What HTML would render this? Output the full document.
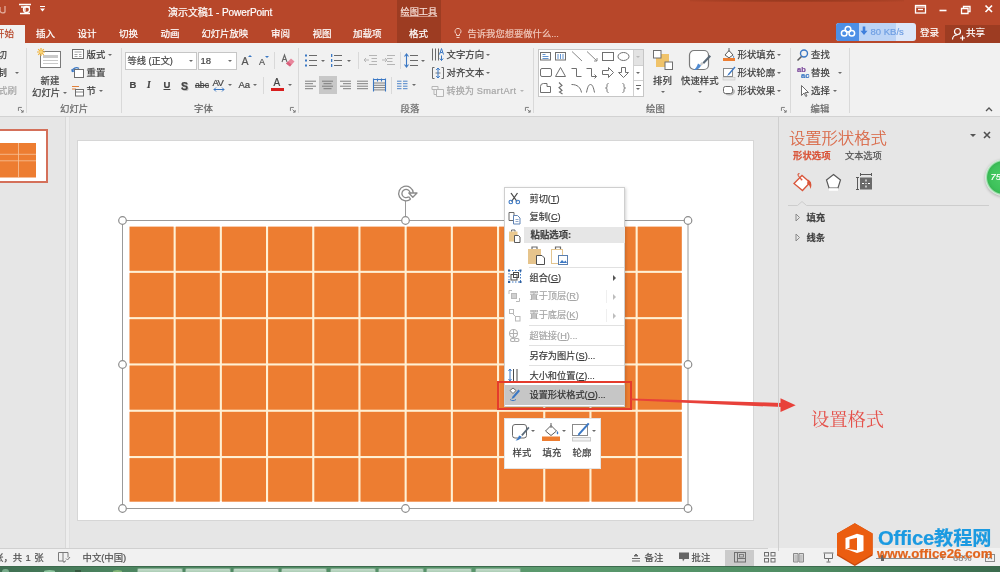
<!DOCTYPE html>
<html lang="zh-CN">
<head>
<meta charset="utf-8">
<title>演示文稿1 - PowerPoint</title>
<style>
*{box-sizing:border-box;margin:0;padding:0}
html,body{width:1000px;height:572px;overflow:hidden;background:#e6e6e6}
body{font-family:"Liberation Sans","Noto Sans CJK SC",sans-serif;font-size:9.4px;color:#444;position:relative}
#app{position:absolute;left:0;top:0;width:1000px;height:572px;overflow:hidden;filter:blur(.55px)}
.a{position:absolute}
.t{position:absolute;white-space:nowrap;line-height:12px;height:12px;font-size:9.4px;color:#3b3b3b;-webkit-text-stroke:.2px currentColor}
.w{color:#fff}
.g{color:#a6a6a6}
.lbl{color:#666}
.sep{position:absolute;width:1px;background:#d9d9d9}
.dd{position:absolute;width:0;height:0;border-left:2.2px solid transparent;border-right:2.2px solid transparent;border-top:2.700px solid #6a6a6a;margin-left:.3px}
.ddw{border-top-color:#fff}
svg{position:absolute;overflow:visible}
</style>
</head>
<body>
<div id="app">
<!-- ===== title bar + tabs ===== -->
<div class="a" id="titlebar" style="left:0;top:0;width:1000px;height:43px;background:#b7472a"></div>
<div class="a" style="left:690px;top:-3px;width:214px;height:5px;background:radial-gradient(ellipse at 50% 0,#7e2f1b 0,#98391f 45%,rgba(183,71,42,0) 100%)"></div>
<div class="a" id="ctxtab" style="left:397px;top:0;width:44px;height:43px;background:#9d3c22"></div>
<!-- quick access -->
<svg style="left:0;top:2px" width="50" height="18" viewBox="0 0 50 18" fill="none" stroke="#f3d6cc" stroke-width="1.3">
<path d="M0 5 v4 a3 3 0 0 0 5 1 v-6" opacity=".7"/>
<path d="M19 2.5h12M21 5h9M25 5v4M20 11.5h10" stroke="#fff"/>
<circle cx="26.5" cy="7.5" r="3" stroke="#fff"/>
<path d="M40 4.5h5" stroke="#fff" stroke-width="1"/>
<path d="M40 6.5h5l-2.5 3z" fill="#fff" stroke="none"/>
</svg>
<div class="t w" style="left:168px;top:7px;font-size:10.050px;letter-spacing:-.1px">演示文稿1 - PowerPoint</div>
<div class="t w" style="left:400.5px;top:6px;font-size:9.2px;color:#f6ddd5;text-decoration:underline;text-decoration-color:rgba(246,221,213,.55)">绘图工具</div>
<!-- window controls -->
<svg style="left:910px;top:2px" width="90" height="16" viewBox="0 0 90 16" fill="none" stroke="#fff" stroke-width="1.3">
<rect x="5.5" y="3.5" width="10" height="7.5"/><path d="M8 7.5h5" /><path d="M5.5 5h10" stroke-width="1"/>
<path d="M29.5 8.5h7" stroke-width="1.6"/>
<path d="M51.5 6.5h6.5v5h-6.5z M53.5 6.5v-2h6.500v5h-2"/>
<path d="M75.5 3.500l6.500 6.500M82 3.500l-6.500 6.500" stroke-width="1.7"/>
</svg>
<!-- tabs -->
<div class="a" style="left:0;top:25px;width:25px;height:19px;background:#f1f1f1"></div>
<div class="t" style="left:-5px;top:27.500px;color:#b7472a;font-size:9.5px">开始</div>
<div class="t w" style="left:36px;top:27.500px;font-size:9.5px">插入</div>
<div class="t w" style="left:77.500px;top:27.500px;font-size:9.5px">设计</div>
<div class="t w" style="left:119px;top:27.500px;font-size:9.5px">切换</div>
<div class="t w" style="left:160.500px;top:27.500px;font-size:9.5px">动画</div>
<div class="t w" style="left:201.500px;top:27.500px;font-size:9.3px">幻灯片放映</div>
<div class="t w" style="left:271px;top:27.500px;font-size:9.5px">审阅</div>
<div class="t w" style="left:312.500px;top:27.500px;font-size:9.5px">视图</div>
<div class="t w" style="left:353px;top:27.500px;font-size:9.5px">加载项</div>
<div class="t w" style="left:409px;top:27.500px;font-size:9.5px">格式</div>
<svg style="left:454px;top:27px" width="8" height="12" viewBox="0 0 8 12" fill="none" stroke="#f3cfc3" stroke-width="1"><path d="M2.500 8.500v-1.500a3 3 0 1 1 3 0v1.500zM2.500 10.500h3"/></svg>
<div class="t" style="left:467.500px;top:27.500px;font-size:9.300px;color:#f0c7ba">告诉我您想要做什么...</div>
<!-- baidu cloud speed widget -->
<div class="a" style="left:836px;top:22.500px;width:80px;height:18px;border-radius:3px;background:#dce8fa;overflow:hidden">
  <div class="a" style="left:0;top:0;width:23px;height:18px;background:#4d8fe6"></div>
  <div class="a" style="left:23px;top:0;width:37px;height:18px;background:#bcd4f6"></div>
</div>
<svg style="left:840px;top:25px" width="16" height="13" viewBox="0 0 16 13" fill="none" stroke="#fff" stroke-width="1.500"><circle cx="8" cy="4.200" r="2.800"/><circle cx="4.200" cy="8.300" r="2.800"/><circle cx="11.800" cy="8.300" r="2.800"/></svg>
<svg style="left:860px;top:26px" width="8" height="10" viewBox="0 0 8 10"><path d="M2.700 .500h2.600v4.300h2.200l-3.500 4.200-3.500-4.200h2.200z" fill="#3f7fdc"/></svg>
<div class="t" style="left:870.500px;top:25.500px;font-size:9.500px;color:#6f9fe3">80 KB/s</div>
<div class="t w" style="left:920px;top:27px;font-size:9.5px">登录</div>
<div class="a" style="left:945px;top:25px;width:55px;height:18px;background:#9d3c22"></div>
<svg style="left:951px;top:27px" width="14" height="14" viewBox="0 0 14 14" fill="none" stroke="#fff" stroke-width="1.200"><circle cx="6.500" cy="4.500" r="3"/><path d="M1.500 12.500c0-3 2-4.500 5-4.500M9 11h5M11.500 8.500v5"/></svg>
<div class="t w" style="left:966px;top:27px;font-size:9.5px">共享</div>
<!-- ===== ribbon ===== -->
<div class="a" id="ribbon" style="left:0;top:43px;width:1000px;height:74px;background:#f1f1f1;border-bottom:1px solid #d2d2d2"></div>
<!-- clipboard (cut off) -->
<div class="t" style="left:-2.500px;top:49px">切</div>
<div class="t" style="left:-2.500px;top:67px">制</div><div class="dd" style="left:15px;top:72px"></div>
<div class="t g" style="left:-2px;top:85px">式刷</div>
<svg class="launch" style="left:17.5px;top:107px" width="6" height="6" viewBox="0 0 7 7" fill="none" stroke="#777" stroke-width="1.100"><path d="M.500 4.500v-4h4"/><path d="M3 3l3 3M6 3.500v2.500h-2.500" /></svg>
<div class="sep" style="left:26px;top:48px;height:65px"></div>
<!-- slides group -->
<svg style="left:37px;top:48px" width="26" height="22" viewBox="0 0 26 22" fill="none">
<rect x="3.500" y="3.500" width="20" height="16" fill="#fff" stroke="#7a7a7a"/>
<rect x="6" y="7" width="15" height="3" fill="#c9c9c9"/><path d="M6 12.500h15M6 15.500h15" stroke="#c9c9c9"/>
<path d="M4 0v8M0 4h8M1.200 1.200l5.600 5.600M6.800 1.200l-5.600 5.600" stroke="#f0b23c" stroke-width="1.200"/>
<circle cx="4" cy="4" r="1.800" fill="#f7d57a"/>
</svg>
<div class="t" style="left:40.500px;top:75px">新建</div>
<div class="t" style="left:32px;top:87px">幻灯片</div><div class="dd" style="left:62.500px;top:92px"></div>
<svg style="left:71px;top:48px" width="14" height="12" viewBox="0 0 14 12" fill="none" stroke="#6d6d6d"><rect x="1.500" y="1.500" width="11" height="9" fill="#fff"/><path d="M3.500 4h7M3.500 6.500h3M8 6.500h2.500M3.500 8.500h3M8 8.500h2.500" stroke="#8a8a8a" stroke-width=".8"/></svg>
<div class="t" style="left:86.500px;top:49px">版式</div><div class="dd" style="left:108px;top:54px"></div>
<svg style="left:71px;top:66px" width="14" height="13" viewBox="0 0 14 13" fill="none"><rect x="3.500" y="3.500" width="9" height="8" fill="#fff" stroke="#6d6d6d"/><path d="M1 5.500a4.500 4.500 0 0 1 7-3" stroke="#3b78c4" stroke-width="1.300"/><path d="M0 3l1.200 3.200 3-1z" fill="#3b78c4"/></svg>
<div class="t" style="left:86.500px;top:67px">重置</div>
<svg style="left:71px;top:84px" width="14" height="13" viewBox="0 0 14 13" fill="none"><path d="M1 2.500h7M1 5h4" stroke="#e0803a" stroke-width="1.200"/><rect x="4.500" y="5.500" width="8" height="6.500" fill="#fff" stroke="#6d6d6d"/><path d="M4.500 8h8" stroke="#6d6d6d" stroke-width=".8"/></svg>
<div class="t" style="left:86.500px;top:85px">节</div><div class="dd" style="left:98.500px;top:90px"></div>
<div class="t lbl" style="top:103.200px;left:60px">幻灯片</div>
<div class="sep" style="left:121px;top:48px;height:65px"></div>
<!-- font group -->
<div class="a" style="left:125px;top:52px;width:72px;height:17.500px;background:#fff;border:1px solid #c6c6c6"></div>
<div class="t" style="left:127.500px;top:55px;font-size:9.2px;color:#444">等线 (正文)</div><div class="dd" style="left:189px;top:59.500px"></div>
<div class="a" style="left:197.500px;top:52px;width:39px;height:17.500px;background:#fff;border:1px solid #c6c6c6"></div>
<div class="t" style="left:200.500px;top:55px;font-size:9.5px;color:#444">18</div><div class="dd" style="left:228px;top:59.500px"></div>
<div class="t" style="left:241.500px;top:55px;font-size:10.500px;color:#555">A</div><div class="a" style="left:248px;top:55px;width:0;height:0;border-left:2px solid transparent;border-right:2px solid transparent;border-bottom:2.500px solid #3b78c4"></div>
<div class="t" style="left:259px;top:56px;font-size:9px;color:#555">A</div><div class="a" style="left:265px;top:56px;width:0;height:0;border-left:2px solid transparent;border-right:2px solid transparent;border-top:2.500px solid #3b78c4"></div>
<div class="sep" style="left:274px;top:52px;height:17px"></div>
<svg style="left:280px;top:53px" width="16" height="15" viewBox="0 0 16 15" fill="none"><path d="M2 9l2.500-7 2.500 7M3 6.500h3" stroke="#666" stroke-width="1.100"/><path d="M6 10.500l5-5 3.500 3-4.500 5z" fill="#e8879c"/><path d="M6 10.500l2-2 3.500 3-1.500 2z" fill="#d9607c"/></svg>
<div class="t" style="left:129.500px;top:79px;font-weight:bold;font-size:9.500px;color:#444">B</div>
<div class="t" style="left:147px;top:79px;font-style:italic;font-weight:bold;font-size:9.500px;color:#444;font-family:'Liberation Serif',serif">I</div>
<div class="t" style="left:163.500px;top:79px;font-size:9.500px;color:#444;text-decoration:underline;font-weight:bold">U</div>
<div class="t" style="left:181px;top:79.500px;font-size:10.500px;color:#444;font-weight:bold;text-shadow:1px 1px 0 #bbb">S</div>
<div class="t" style="left:195px;top:79px;font-size:8.700px;color:#444;text-decoration:line-through;text-decoration-thickness:.6px">abc</div>
<div class="t" style="left:212.500px;top:76.500px;font-size:9.500px;color:#444;letter-spacing:-.6px">AV</div>
<svg style="left:213px;top:87px" width="12" height="5" viewBox="0 0 12 5" fill="none" stroke="#3b78c4" stroke-width="1"><path d="M1 2.500h10M3 .500l-2 2 2 2M9 .500l2 2-2 2"/></svg>
<div class="dd" style="left:227.500px;top:84px"></div>
<div class="t" style="left:238.500px;top:79px;font-size:9.500px;color:#444">Aa</div><div class="dd" style="left:253px;top:84px"></div>
<div class="sep" style="left:263px;top:77px;height:17px"></div>
<div class="t" style="left:273.500px;top:77px;font-size:10px;color:#444">A</div><div class="a" style="left:271px;top:88.200px;width:12.500px;height:2.600px;background:#d81e1e"></div><div class="dd" style="left:287.500px;top:84px"></div>
<div class="t lbl" style="top:103.200px;left:194px">字体</div>
<svg class="launch" style="left:290.0px;top:107px" width="6" height="6" viewBox="0 0 7 7" fill="none" stroke="#777" stroke-width="1.100"><path d="M.500 4.500v-4h4"/><path d="M3 3l3 3M6 3.500v2.500h-2.500" /></svg>
<div class="sep" style="left:298px;top:48px;height:65px"></div>
<!-- paragraph group -->
<svg style="left:304px;top:53px" width="120" height="15" viewBox="0 0 120 15" fill="none">
<g stroke="#6a6a6a" stroke-width="1"><path d="M5 2.500h8M5 7.500h8M5 12.500h8"/><path d="M30 2.500h8M30 7.500h8M30 12.500h8"/></g>
<g fill="#3b78c4"><rect x="1" y="1.500" width="2" height="2"/><rect x="1" y="6.500" width="2" height="2"/><rect x="1" y="11.500" width="2" height="2"/><rect x="27" y="1" width="1.300" height="3"/><rect x="27" y="6" width="1.300" height="3"/><rect x="27" y="11" width="1.300" height="3"/></g>
<g stroke="#b5b5b5" stroke-width="1"><path d="M65 2.500h8M67.500 5.500h5.500M67.500 8.500h5.500M65 11.500h8M60 7h5M62 5l-2 2 2 2"/><path d="M83 2.500h8M83 5.500h5.500M83 8.500h5.500M83 11.500h8M78 7h5M81 5l2 2-2 2"/></g>
<g stroke="#6a6a6a" stroke-width="1"><path d="M106 2.500h8M106 7.500h8M106 12.500h8"/></g>
<g stroke="#3b78c4" stroke-width="1.100"><path d="M102.500 1v13M100.500 3.500l2-2.500 2 2.500M100.500 11.500l2 2.500 2-2.500"/></g>
</svg>
<div class="dd" style="left:320.500px;top:59.500px"></div>
<div class="dd" style="left:347px;top:59.500px"></div>
<div class="sep" style="left:358px;top:52px;height:17px"></div>
<div class="sep" style="left:400px;top:52px;height:17px"></div>
<div class="dd" style="left:420.500px;top:59.500px"></div>
<div class="a" style="left:319px;top:76px;width:17.500px;height:17.800px;background:#c8c8c8"></div>
<svg style="left:304px;top:78px" width="112" height="14" viewBox="0 0 112 14" fill="none">
<g stroke="#737373" stroke-width=".9"><path d="M1 3.200h11M1 5.700h8M1 8.200h11M1 10.700h8"/><path d="M18 3.200h11M19.500 5.700h8M18 8.200h11M19.500 10.700h8"/><path d="M36 3.200h11M39 5.700h8M36 8.200h11M39 10.700h8"/><path d="M53 3.200h11M53 5.700h11M53 8.200h11M53 10.700h11"/><path d="M70 5h11M70 7.300h11M70 9.600h11M70 11.900h11"/></g>
<g stroke="#3b78c4" stroke-width="1.100"><path d="M69.500 .500v13M81.500 .500v13M69.500 1.500h12M73.500 .500v3M77.500 .500v3"/><path d="M93 3.200h4.500M99 3.200h4.500M93 5.700h4.500M99 5.700h4.500M93 8.200h4.500M99 8.200h4.500M93 10.700h4.500M99 10.700h4.500" stroke-width=".9"/></g>
</svg>
<div class="sep" style="left:391px;top:77px;height:17px"></div>
<div class="dd" style="left:411.500px;top:84px"></div>
<svg style="left:431px;top:47px" width="14" height="50" viewBox="0 0 14 50" fill="none">
<g stroke="#6a6a6a" stroke-width="1"><path d="M1.500 1.500v12M4.500 1.500v12M7.500 1.500v12"/></g>
<g stroke="#3b78c4" stroke-width="1"><path d="M8.500 7.500l2-6 2 6M9.300 5.500h2.400M10.500 8.500v5M8.800 11.500l1.700 2 1.700-2"/></g>
<g stroke="#6a6a6a" stroke-width="1"><path d="M3.500 20.500h-2v11h2M10.500 20.500h2v11h-2"/><path d="M4.500 26h5" stroke-width=".9"/></g>
<g stroke="#3b78c4" stroke-width="1"><path d="M7 21v10M5.200 23l1.800-2 1.800 2M5.200 29l1.800 2 1.800-2"/></g>
<g stroke="#b5b5b5" stroke-width="1" fill="#f4f4f4"><path d="M1 39.500h6v3h-6zM5.500 42.500h7v7h-7zM3 42.500v5h2.500"/></g>
</svg>
<div class="t" style="left:446.500px;top:49px">文字方向</div><div class="dd" style="left:486px;top:54px"></div>
<div class="t" style="left:446.500px;top:67px">对齐文本</div><div class="dd" style="left:486px;top:72px"></div>
<div class="t g" style="left:446.500px;top:85px;font-size:9.200px">转换为 <span style="letter-spacing:.45px">SmartArt</span></div><div class="dd" style="left:520px;top:90px;border-top-color:#b5b5b5"></div>
<div class="t lbl" style="top:103.200px;left:400.500px">段落</div>
<svg class="launch" style="left:525.0px;top:107px" width="6" height="6" viewBox="0 0 7 7" fill="none" stroke="#777" stroke-width="1.100"><path d="M.500 4.500v-4h4"/><path d="M3 3l3 3M6 3.500v2.500h-2.500" /></svg>
<div class="sep" style="left:533px;top:48px;height:65px"></div>
<!-- drawing group -->
<div class="a" style="left:537.500px;top:48.500px;width:106px;height:48px;background:#fff;border:1px solid #c6c6c6"></div>
<div class="a" style="left:633px;top:49.500px;width:10px;height:15px;background:#e3e3e3;border-left:1px solid #d0d0d0"></div>
<div class="a" style="left:633px;top:64.500px;width:10px;height:1px;background:#d0d0d0"></div>
<div class="a" style="left:633px;top:65.500px;width:10px;height:30px;border-left:1px solid #d0d0d0"></div>
<div class="a" style="left:633px;top:80px;width:10px;height:1px;background:#d0d0d0"></div>
<div class="dd" style="left:635.500px;top:55.500px;border-top-color:#b9b9b9"></div>
<div class="dd" style="left:635.500px;top:71.500px"></div>
<div class="a" style="left:635.500px;top:85px;width:5px;height:1px;background:#666"></div><div class="dd" style="left:635.500px;top:87.500px"></div>
<svg style="left:538px;top:49px" width="95" height="47" viewBox="0 0 95 47" fill="none" stroke="#6f6f6f" stroke-width="1">
<rect x="2.500" y="3.500" width="10" height="7.500"/><path d="M4.500 5.500h3M4.500 7.500h6M4.500 9.500h6" stroke="#3b78c4" stroke-width=".8"/>
<rect x="17.500" y="3.500" width="10" height="7.500"/><path d="M20 5v5M22.500 5v5M25 5v5" stroke="#3b78c4" stroke-width=".8"/>
<path d="M34 2.500l10 9.500" stroke="#8a8a8a"/>
<path d="M49 2.500l10 9.500M59 12v-3M59 12h-3" stroke="#8a8a8a"/>
<rect x="64.500" y="3.500" width="11" height="8"/>
<ellipse cx="85.500" cy="7.500" rx="5.500" ry="4"/>
<rect x="2.500" y="19.500" width="11" height="8" rx="1.500"/>
<path d="M22.500 18.500l5 9h-10z"/>
<path d="M33.500 19.500h5v8h5"/>
<path d="M48.500 19.500h5v8h5M58.500 27.500l-2-2M58.500 27.500l-2 2"/>
<path d="M64.500 21.500h6v-3l5 5-5 5v-3h-6z"/>
<path d="M83.500 18.500h4v5h3l-5 5-5-5h3z"/>
<path d="M2.500 43.500v-6a3 3 0 0 1 3-3h3.500v3h3.500v6z"/>
<path d="M21 33.500l3 3-3 2 3 3-2.500 1.500 3 2" stroke-width="1.100"/>
<path d="M33.500 35.500c6 0 9 3 10 8"/>
<path d="M48.500 43.500c1-5 2-8 4-8s3 3 4 8"/>
<path d="M70.500 34.500c-1.500 0-1.500 1-1.500 2.500s0 2-1.500 2c1.500 0 1.500 .5 1.500 2s0 2.500 1.500 2.500" stroke="#7a7a7a"/>
<path d="M84.500 34.500c1.500 0 1.500 1 1.500 2.500s0 2 1.500 2c-1.500 0-1.500 .5-1.500 2s0 2.500-1.500 2.500" stroke="#7a7a7a"/>
</svg>
<svg style="left:652px;top:49px" width="22" height="22" viewBox="0 0 22 22" fill="none"><rect x="4" y="5" width="13" height="13" fill="#f0c36a"/><rect x="1.500" y="1.500" width="7.500" height="7.500" fill="#fff" stroke="#6f6f6f"/><rect x="13" y="13" width="7.500" height="7.500" fill="#fff" stroke="#6f6f6f"/></svg>
<div class="t" style="left:653px;top:75px">排列</div><div class="dd" style="left:660.500px;top:91px"></div>
<svg style="left:688px;top:49px" width="25" height="25" viewBox="0 0 25 25" fill="none"><rect x="1.500" y="1.500" width="19" height="19" rx="4.500" fill="#fff" stroke="#7a7a7a" stroke-width="1.200"/><path d="M23 7.500l-7 7.500-1.500-1.500 7-7.500z" fill="#5b6a78"/><path d="M15.500 14.500l-2 2.200-1.800-1.500 2.200-2.200z" fill="#c9c9c9"/><path d="M13 16.500c-1 2.500-3.500 4.500-7.500 4.500 2.500-1.500 3.500-3.500 4.500-6.500z" fill="#4f8ad1"/></svg>
<div class="t" style="left:681px;top:75px">快速样式</div><div class="dd" style="left:698px;top:91px"></div>
<svg style="left:722px;top:47px" width="14" height="50" viewBox="0 0 14 50" fill="none">
<path d="M3 8l4-4.500 4 4.500-4 2.800z" fill="#fff" stroke="#5e5e5e"/><path d="M7 1v4" stroke="#5e5e5e"/><path d="M11.500 8.500c.8 1.200 1 2 .2 2.500-.8-.5-.6-1.300-.2-2.500z" fill="#3b78c4"/><rect x="1" y="11" width="12" height="3" fill="#ed7d31"/>
<rect x="1.500" y="21.500" width="9" height="8" fill="#fff" stroke="#8a8a8a"/><path d="M12.500 19.500l-6 7-1.500 2.500 2.500-1.500 6-7z" fill="#3b78c4"/><rect x="1" y="30.500" width="12" height="2.500" fill="#e9e9e9" stroke="#bbb" stroke-width=".5"/>
<ellipse cx="7.500" cy="44.500" rx="5.500" ry="4" fill="#b9b9b9"/><rect x="1.500" y="39.500" width="9" height="7" rx="2" fill="#fff" stroke="#6a6a6a"/>
</svg>
<div class="t" style="left:737.500px;top:49px">形状填充</div><div class="dd" style="left:777px;top:54px"></div>
<div class="t" style="left:737.500px;top:67px">形状轮廓</div><div class="dd" style="left:777px;top:72px"></div>
<div class="t" style="left:737.500px;top:85px">形状效果</div><div class="dd" style="left:777px;top:90px"></div>
<div class="t lbl" style="top:103.200px;left:646px">绘图</div>
<svg class="launch" style="left:781.0px;top:107px" width="6" height="6" viewBox="0 0 7 7" fill="none" stroke="#777" stroke-width="1.100"><path d="M.500 4.500v-4h4"/><path d="M3 3l3 3M6 3.500v2.500h-2.500" /></svg>
<div class="sep" style="left:790px;top:48px;height:65px"></div>
<!-- editing group -->
<svg style="left:796px;top:47px" width="14" height="50" viewBox="0 0 14 50" fill="none">
<circle cx="8" cy="6.500" r="3.500" stroke="#3b78c4" stroke-width="1.400"/><path d="M5.500 9.500l-4 4" stroke="#5e5e5e" stroke-width="1.600"/>
<path d="M5.500 38.500v10l2.500-2.500 1.800 3.500 1.200-.6-1.800-3.400h3.300z" fill="#fff" stroke="#5e5e5e" stroke-width=".9"/>
</svg>
<div class="t" style="left:797px;top:66px;font-size:7.500px;line-height:8px;height:8px;color:#7c4a9c;font-weight:bold">ab</div>
<div class="t" style="left:801px;top:71.500px;font-size:7.500px;line-height:8px;height:8px;color:#3b78c4;font-weight:bold">ac</div>
<div class="t" style="left:811px;top:49px">查找</div>
<div class="t" style="left:811px;top:67px">替换</div><div class="dd" style="left:837.500px;top:72px"></div>
<div class="t" style="left:811px;top:85px">选择</div><div class="dd" style="left:832.500px;top:90px"></div>
<div class="t lbl" style="top:103.200px;left:810.500px">编辑</div>
<div class="sep" style="left:849px;top:48px;height:65px"></div>
<svg style="left:984.500px;top:106px" width="8" height="6" viewBox="0 0 8 6" fill="none" stroke="#555" stroke-width="1.300"><path d="M1 5l3-3 3 3"/></svg>
<!-- ===== body ===== -->
<div class="a" id="work" style="left:0;top:117px;width:1000px;height:431px;background:#e6e6e6"></div>
<!-- thumbnail pane -->
<div class="a" style="left:-4px;top:129px;width:52px;height:53.500px;background:#fff;border:2px solid #d4705a"></div>
<svg style="left:0;top:143px" width="36" height="35" viewBox="0 0 36 35"><rect width="36" height="34.500" fill="#ed7d31"/><path d="M18.500 0v34.500M0 11.300h36M0 17.800h36" stroke="#f8c49a" stroke-width=".8" fill="none"/></svg>
<div class="a" style="left:64.500px;top:117px;width:1px;height:431px;background:#d8d8d8"></div>
<div class="a" style="left:65.500px;top:117px;width:3.500px;height:431px;background:#ededed"></div>
<div class="a" style="left:69px;top:117px;width:1px;height:431px;background:#e0e0e0"></div>
<!-- slide -->
<div class="a" id="slide" style="left:77.500px;top:140.500px;width:675.500px;height:379.500px;background:#fff;box-shadow:0 0 0 1px #d6d6d6"></div>
<svg id="grid" style="left:78px;top:140px" width="675" height="380" viewBox="0 0 675 380" fill="#ed7d31">
<rect x="52" y="87" width="551" height="274" fill="#fff0d4"/>
<rect x="51.5" y="86.6" width="44.1" height="44.2"/><rect x="97.7" y="86.6" width="44.1" height="44.2"/><rect x="143.9" y="86.6" width="44.1" height="44.2"/><rect x="190.1" y="86.6" width="44.1" height="44.2"/><rect x="236.3" y="86.6" width="44.1" height="44.2"/><rect x="282.5" y="86.6" width="44.1" height="44.2"/>
<rect x="328.7" y="86.6" width="44.1" height="44.2"/><rect x="374.9" y="86.6" width="44.1" height="44.2"/><rect x="421.1" y="86.6" width="44.1" height="44.2"/><rect x="467.3" y="86.6" width="44.1" height="44.2"/><rect x="513.5" y="86.6" width="44.1" height="44.2"/><rect x="559.7" y="86.6" width="44.1" height="44.2"/>
<rect x="51.5" y="132.9" width="44.1" height="44.2"/><rect x="97.7" y="132.9" width="44.1" height="44.2"/><rect x="143.9" y="132.9" width="44.1" height="44.2"/><rect x="190.1" y="132.9" width="44.1" height="44.2"/><rect x="236.3" y="132.9" width="44.1" height="44.2"/><rect x="282.5" y="132.9" width="44.1" height="44.2"/>
<rect x="328.7" y="132.9" width="44.1" height="44.2"/><rect x="374.9" y="132.9" width="44.1" height="44.2"/><rect x="421.1" y="132.9" width="44.1" height="44.2"/><rect x="467.3" y="132.9" width="44.1" height="44.2"/><rect x="513.5" y="132.9" width="44.1" height="44.2"/><rect x="559.7" y="132.9" width="44.1" height="44.2"/>
<rect x="51.5" y="179.2" width="44.1" height="44.2"/><rect x="97.7" y="179.2" width="44.1" height="44.2"/><rect x="143.9" y="179.2" width="44.1" height="44.2"/><rect x="190.1" y="179.2" width="44.1" height="44.2"/><rect x="236.3" y="179.2" width="44.1" height="44.2"/><rect x="282.5" y="179.2" width="44.1" height="44.2"/>
<rect x="328.7" y="179.2" width="44.1" height="44.2"/><rect x="374.9" y="179.2" width="44.1" height="44.2"/><rect x="421.1" y="179.2" width="44.1" height="44.2"/><rect x="467.3" y="179.2" width="44.1" height="44.2"/><rect x="513.5" y="179.2" width="44.1" height="44.2"/><rect x="559.7" y="179.2" width="44.1" height="44.2"/>
<rect x="51.5" y="225.5" width="44.1" height="44.2"/><rect x="97.7" y="225.5" width="44.1" height="44.2"/><rect x="143.9" y="225.5" width="44.1" height="44.2"/><rect x="190.1" y="225.5" width="44.1" height="44.2"/><rect x="236.3" y="225.5" width="44.1" height="44.2"/><rect x="282.5" y="225.5" width="44.1" height="44.2"/>
<rect x="328.7" y="225.5" width="44.1" height="44.2"/><rect x="374.9" y="225.5" width="44.1" height="44.2"/><rect x="421.1" y="225.5" width="44.1" height="44.2"/><rect x="467.3" y="225.5" width="44.1" height="44.2"/><rect x="513.5" y="225.5" width="44.1" height="44.2"/><rect x="559.7" y="225.5" width="44.1" height="44.2"/>
<rect x="51.5" y="271.8" width="44.1" height="44.2"/><rect x="97.7" y="271.8" width="44.1" height="44.2"/><rect x="143.9" y="271.8" width="44.1" height="44.2"/><rect x="190.1" y="271.8" width="44.1" height="44.2"/><rect x="236.3" y="271.8" width="44.1" height="44.2"/><rect x="282.5" y="271.8" width="44.1" height="44.2"/>
<rect x="328.7" y="271.8" width="44.1" height="44.2"/><rect x="374.9" y="271.8" width="44.1" height="44.2"/><rect x="421.1" y="271.8" width="44.1" height="44.2"/><rect x="467.3" y="271.8" width="44.1" height="44.2"/><rect x="513.5" y="271.8" width="44.1" height="44.2"/><rect x="559.7" y="271.8" width="44.1" height="44.2"/>
<rect x="51.5" y="318.1" width="44.1" height="43.6"/><rect x="97.7" y="318.1" width="44.1" height="43.6"/><rect x="143.9" y="318.1" width="44.1" height="43.6"/><rect x="190.1" y="318.1" width="44.1" height="43.6"/><rect x="236.3" y="318.1" width="44.1" height="43.6"/><rect x="282.5" y="318.1" width="44.1" height="43.6"/>
<rect x="328.7" y="318.1" width="44.1" height="43.6"/><rect x="374.9" y="318.1" width="44.1" height="43.6"/><rect x="421.1" y="318.1" width="44.1" height="43.6"/><rect x="467.3" y="318.1" width="44.1" height="43.6"/><rect x="513.5" y="318.1" width="44.1" height="43.6"/><rect x="559.7" y="318.1" width="44.1" height="43.6"/>
</svg>
<!-- selection frame -->
<svg style="left:110px;top:180px" width="590" height="340" viewBox="110 180 590 340" fill="none" stroke="#9a9a9a" stroke-width="1">
<rect x="122.500" y="220.500" width="565.500" height="288"/>
<path d="M405.500 201v16"/>
<g fill="#fff" stroke="#8c8c8c" stroke-width="1.200">
<circle cx="122.500" cy="220.500" r="3.800"/><circle cx="405.500" cy="220.500" r="3.800"/><circle cx="688" cy="220.500" r="3.800"/>
<circle cx="122.500" cy="364.500" r="3.800"/><circle cx="688" cy="364.500" r="3.800"/>
<circle cx="122.500" cy="508.500" r="3.800"/><circle cx="405.500" cy="508.500" r="3.800"/><circle cx="688" cy="508.500" r="3.800"/>
</g>
<g stroke="#8a8a8a" stroke-width="1.300" stroke-linejoin="round"><path d="M410.600 199.200A7.300 7.300 0 1 1 413.300 193"/><path d="M408.600 196.700A4.100 4.100 0 1 1 410.100 193"/><path d="M408.600 196.700l2 2.500"/><path d="M408.800 193h8.200l-4.200 4.300z" fill="#fff"/></g>
</svg>
<!-- ===== context menu ===== -->
<div class="a" id="ctxmenu" style="left:503.500px;top:187px;width:121.500px;height:220px;background:#fff;border:1px solid #cfcfcf;box-shadow:1px 1px 3px rgba(0,0,0,.18)"></div>
<div class="a" style="left:523.500px;top:227px;width:101px;height:16px;background:#e6e6e6"></div>
<div class="a" style="left:504.500px;top:384.500px;width:120px;height:20px;background:#c6c6c6"></div>
<div class="a" style="left:529px;top:267px;width:95px;height:1px;background:#e1e1e1"></div>
<div class="a" style="left:529px;top:324.500px;width:95px;height:1px;background:#e1e1e1"></div>
<div class="a" style="left:529px;top:345px;width:95px;height:1px;background:#e1e1e1"></div>
<div class="a" style="left:529px;top:365px;width:95px;height:1px;background:#e1e1e1"></div>
<div class="a" style="left:606px;top:290px;width:1px;height:13px;background:#efefef"></div>
<div class="a" style="left:606px;top:309px;width:1px;height:13px;background:#efefef"></div>
<div class="t" style="left:529.500px;top:192.500px;font-size:9.200px">剪切(<u>T</u>)</div>
<div class="t" style="left:529.500px;top:211px;font-size:9.200px">复制(<u>C</u>)</div>
<div class="t" style="left:530.500px;top:229px;font-weight:bold;color:#444">粘贴选项:</div>
<div class="t" style="left:529.500px;top:271.500px;font-size:9.200px">组合(<u>G</u>)</div>
<div class="t g" style="left:529.500px;top:290px;font-size:9.200px">置于顶层(<u>R</u>)</div>
<div class="t g" style="left:529.500px;top:309px;font-size:9.200px">置于底层(<u>K</u>)</div>
<div class="t g" style="left:529.500px;top:330px;font-size:9.200px">超链接(<u>H</u>)...</div>
<div class="t" style="left:529.500px;top:350px;font-size:9.200px">另存为图片(<u>S</u>)...</div>
<div class="t" style="left:529.500px;top:369.500px;font-size:9.200px">大小和位置(<u>Z</u>)...</div>
<div class="t" style="left:529.500px;top:388.500px;font-size:9.200px;color:#333">设置形状格式(<u>O</u>)...</div>
<div class="a" style="left:613px;top:274.500px;width:0;height:0;border-top:3px solid transparent;border-bottom:3px solid transparent;border-left:3.500px solid #555"></div>
<div class="a" style="left:613px;top:293.500px;width:0;height:0;border-top:3px solid transparent;border-bottom:3px solid transparent;border-left:3.500px solid #bdbdbd"></div>
<div class="a" style="left:613px;top:312.500px;width:0;height:0;border-top:3px solid transparent;border-bottom:3px solid transparent;border-left:3.500px solid #bdbdbd"></div>
<!-- menu icons -->
<svg style="left:507px;top:190px" width="16" height="216" viewBox="0 0 16 216" fill="none">
<g stroke="#4a4a4a" stroke-width="1.300"><path d="M4 3l6 8.500M10.500 3l-6 8.500"/></g>
<g stroke="#3b78c4" stroke-width="1.100"><circle cx="3.800" cy="12" r="1.800"/><circle cx="10.800" cy="12" r="1.800"/></g>
<g stroke="#6a6a6a" stroke-width="1" fill="#fff"><path d="M2 22.500h5v8h-5z"/><path d="M6.500 25.500h4l2.500 2.500v6h-6.500z" stroke="#5f83b5"/><path d="M8.500 29.500h3M8.500 31.500h3" stroke="#5f83b5" stroke-width=".7"/></g>
<path d="M2 41.500h8.500v10h-8.500z" fill="#e9c88f"/><path d="M4.500 41.500v-1.500h3.500v1.500" stroke="#6a6a6a"/><path d="M7.500 45.500h4l1.500 1.500v5.500h-5.500z" fill="#fff" stroke="#5a5a5a"/>
<g stroke="#4a4a4a" stroke-width="1"><rect x="4" y="84.500" width="6" height="5.500" /><rect x="6.500" y="82.500" width="5" height="5"/></g>
<g stroke="#3b78c4" stroke-width="1" stroke-dasharray="1.500 1.500"><rect x="2" y="80.500" width="11.500" height="11.500"/></g>
<g fill="#2f5f9e"><rect x="1" y="79.500" width="2" height="2"/><rect x="12.500" y="79.500" width="2" height="2"/><rect x="1" y="91" width="2" height="2"/><rect x="12.500" y="91" width="2" height="2"/></g>
<g stroke="#b9b9b9" stroke-width="1"><path d="M2 104v-3.500h3"/><rect x="4.500" y="103.500" width="5" height="5" fill="#d0d0d0"/><path d="M9 111.500h3.500v-3.500"/></g>
<g stroke="#b9b9b9" stroke-width="1"><rect x="2.500" y="119.500" width="4" height="4"/><path d="M5.500 123.500l3 3" /><rect x="8.500" y="126.500" width="4.500" height="4.500"/></g>
<g stroke="#b0b0b0" stroke-width="1.100"><circle cx="6.500" cy="143.500" r="4"/><path d="M2.500 143.500h8M6.500 139.500v8"/><rect x="3.500" y="148.500" width="4.500" height="3" rx="1.500" fill="#fff"/><rect x="7.500" y="148.500" width="4.500" height="3" rx="1.500" fill="#fff"/></g>
<g stroke="#4a4a4a" stroke-width="1"><path d="M6.500 179v12.500h3.500v-12.500"/></g>
<g stroke="#3b78c4" stroke-width="1"><path d="M3 179v12M1.500 181l1.500-2 1.500 2M1.500 189l1.500 2 1.500-2"/></g>
<g><path d="M3 200.500l3-2.500 3 2.500-3 3z" fill="#fff" stroke="#6a6a6a"/><path d="M11.500 199.500l-6 7-1 2.500 2.500-1 6-7z" fill="#3b78c4"/><path d="M3 209.500c2 1.500 4 1.500 6 0" stroke="#3b78c4"/></g>
</svg>
<!-- paste option buttons -->
<svg style="left:527px;top:246px" width="44" height="20" viewBox="0 0 44 20" fill="none">
<rect x="1" y="3" width="13" height="15" fill="#e6c48c"/><path d="M5 3v-2h5v2" stroke="#6a6a6a" stroke-width="1.200"/><path d="M9.500 9.500h5.500l2.500 2.500v6.500h-8z" fill="#fff" stroke="#4f4f4f"/>
<rect x="24.500" y="3.500" width="11" height="14" fill="#fff" stroke="#e3c590"/><path d="M28.500 3v-2h5v2" stroke="#6a6a6a" stroke-width="1.200"/><rect x="31.500" y="9.500" width="9" height="9" fill="#fff" stroke="#5a7fb0"/><path d="M32.500 17l2.500-3 2 2 1.500-1.500 1.500 2.500z" fill="#3b78c4"/>
</svg>
<!-- red highlight box -->
<div class="a" id="redbox" style="left:497px;top:381px;width:135px;height:28.500px;border:2px solid #e43b2c"></div>
<!-- mini toolbar -->
<div class="a" id="mini" style="left:503.500px;top:417.500px;width:97px;height:51.500px;background:#fff;border:1px solid #e4e4e4"></div>
<svg style="left:511px;top:422px" width="86" height="21" viewBox="0 0 86 21" fill="none">
<rect x="1.500" y="2.500" width="14" height="13.500" rx="2.500" fill="#fff" stroke="#6a6a6a"/><path d="M18.500 6l-7 8-1.300-1.200 7-8z" fill="#5b6a78"/><path d="M10.500 14.500c-1 2.500-3 4-6 4 2-1.500 2.800-3 3.500-5z" fill="#3b78c4"/>
<path d="M34.500 9l5.500-5.500 5.500 5.500-5.500 4.500z" fill="#fff" stroke="#5e5e5e"/><path d="M40 1v5" stroke="#5e5e5e"/><path d="M46.500 9c1 1.500 1.200 2.800 0 3.500-1.200-.7-1-2 0-3.500z" fill="#3b78c4"/><rect x="31" y="14.500" width="18" height="4.500" fill="#ed7d31"/>
<rect x="61.500" y="2.500" width="15" height="11" fill="#fff" stroke="#8a8a8a"/><path d="M78.500 2l-9.500 10.500-2.500 1.500 1-2.800 9.500-10.500z" fill="#3b78c4"/><rect x="61.500" y="15.500" width="18" height="3.500" fill="#f1f1f1" stroke="#c9c9c9"/>
</svg>
<div class="dd" style="left:531px;top:430px;border-width:2.500px 2px 0 2px"></div>
<div class="dd" style="left:561.500px;top:430px;border-width:2.500px 2px 0 2px"></div>
<div class="dd" style="left:592px;top:430px;border-width:2.500px 2px 0 2px"></div>
<div class="t" style="left:512.500px;top:447px">样式</div>
<div class="t" style="left:542.500px;top:447px">填充</div>
<div class="t" style="left:572.500px;top:447px">轮廓</div>
<!-- annotation arrow + text -->
<svg style="left:630px;top:390px" width="170" height="30" viewBox="630 390 170 30"><path d="M631 398.600L782 402.900v4.200L631 400.300z" fill="#e8413a"/><path d="M780.500 398.300l15.200 7-15.200 6.700z" fill="#e8413a"/></svg>
<div class="t" style="left:811px;top:409.500px;height:20px;line-height:20px;font-size:18.300px;color:#e5514a;-webkit-text-stroke:0;font-family:'Liberation Serif','Noto Serif CJK SC',serif">设置格式</div>
<!-- ===== format shape pane ===== -->
<div class="a" style="left:778.200px;top:117px;width:1px;height:434px;background:#cfcfcf;z-index:2"></div>
<div class="t" style="left:789px;top:128px;height:20px;line-height:20px;font-size:16.300px;color:#d9623f;font-weight:300">设置形状格式</div>
<div class="t" style="left:793px;top:150px;font-weight:bold;color:#d9553a;font-size:9.400px">形状选项</div>
<div class="t" style="left:845px;top:150px;color:#505050;font-size:9.200px">文本选项</div>
<div class="dd" style="left:969.500px;top:133.500px;border-width:3px 3px 0 3px;border-top-color:#555"></div>
<svg style="left:982.500px;top:131px" width="8" height="8" viewBox="0 0 8 8" fill="none" stroke="#505050" stroke-width="1.600"><path d="M1 1l6 6M7 1l-6 6"/></svg>
<svg style="left:792px;top:172px" width="84" height="20" viewBox="0 0 84 20" fill="none">
<path d="M2 11.500l8-8 8 7-7.500 8z" fill="#fff" stroke="#d9553a" stroke-width="1.300"/><path d="M7.500 1.500c-1.500 0-2 1-1 2.500l2.500 3" stroke="#d9553a" stroke-width="1.100"/><circle cx="9.500" cy="7.500" r="1" fill="#d9553a"/><path d="M16 7.500c3 1.500 4.500 5 2.500 9.500-.5-3-1.500-4.500-3.500-5.500z" fill="#d9553a"/>
<path d="M41.500 2.500l7 5.500-2.500 8h-9l-2.500-8z" fill="#fff" stroke="#5a5a5a" stroke-width="1.200"/><path d="M37 17.500h9" stroke="#fff" stroke-width="2.500"/>
<rect x="68" y="5.500" width="12" height="12" fill="#6a6a6a"/><path d="M65.500 5v13M64 5.500h3M64 17.500h3M68 2.500h12M68.500 1v3M79.500 1v3" stroke="#5a5a5a" stroke-width="1"/><path d="M74 7.500v8M70 11.500h8" stroke="#fff" stroke-width="1.200" stroke-dasharray="2 1.500 1 1.500"/>
</svg>
<svg style="left:788px;top:200px" width="202" height="8" viewBox="0 0 202 8" fill="none" stroke="#cdcdcd" stroke-width="1"><path d="M0 5.500h9.500l4.500-4 4.500 4h182.500"/></svg>
<svg style="left:794px;top:212px" width="8" height="32" viewBox="0 0 8 32" fill="none" stroke="#8a8a8a" stroke-width="1"><path d="M2 2l3.500 3.500-3.500 3.500zM2 22l3.500 3.500-3.500 3.500z"/></svg>
<div class="t" style="left:806.500px;top:211.500px;font-weight:bold;color:#444;font-size:9.300px">填充</div>
<div class="t" style="left:806.500px;top:231.500px;font-weight:bold;color:#444;font-size:9.300px">线条</div>
<!-- floating green ball -->
<div class="a" style="left:984.500px;top:158.500px;width:37px;height:37px;border-radius:50%;background:radial-gradient(closest-side,#4ccd68 0,#3ec25b 70%,#38b854 86%,#9bdcaa 91%,#d4ecd9 97%,#cfd8d1 100%);box-shadow:0 1px 3px rgba(0,0,0,.25)"></div>
<div class="t w" style="left:990.500px;top:171px;font-size:9.500px;font-style:italic">75</div>
<!-- ===== status bar ===== -->
<div class="a" id="status" style="left:0;top:548px;width:1000px;height:18px;background:#f1f1f1"></div>
<div class="a" style="left:0;top:547.500px;width:768px;height:1px;background:#d0d0d0"></div>
<div class="t" style="left:-6px;top:551.500px;color:#505050;word-spacing:.8px">张，共 1 张</div>
<svg style="left:57px;top:551px" width="14" height="13" viewBox="0 0 14 13" fill="none" stroke="#7a7a7a" stroke-width="1"><path d="M1.500 1.500h4.500v8.500h-4.500zM6 1.500h5v5M6 10l1 1.500 1-1.500h1"/><path d="M9 7.500l1.500 1.500 2.500-3" /></svg>
<div class="t" style="left:82.500px;top:551.500px;color:#505050">中文(中国)</div>
<svg style="left:631px;top:551px" width="10" height="12" viewBox="0 0 10 12" fill="none" stroke="#6a6a6a" stroke-width="1"><path d="M1 7.500h8M1 10h8M3 5l2-2 2 2z" fill="#6a6a6a"/></svg>
<div class="t" style="left:644.500px;top:551.500px;color:#505050">备注</div>
<svg style="left:678px;top:551px" width="12" height="12" viewBox="0 0 12 12"><path d="M1 1.500h10v6.500h-4.500l-1.500 2.500-.5-2.500h-3.500z" fill="#666"/></svg>
<div class="t" style="left:691.500px;top:551.500px;color:#505050">批注</div>
<div class="a" style="left:725px;top:549.500px;width:29px;height:16.500px;background:#cbcbcb"></div>
<svg style="left:733px;top:551px" width="102" height="13" viewBox="0 0 102 13" fill="none" stroke="#707070" stroke-width="1">
<rect x="1.500" y="1.500" width="11" height="9.500"/><path d="M4.500 1.500v9.500M4.500 7.500h8"/><rect x="6.500" y="3.500" width="4" height="2.500" stroke-width=".8"/>
<rect x="31.500" y="1.500" width="4" height="3.500"/><rect x="38" y="1.500" width="4" height="3.500"/><rect x="31.500" y="7.500" width="4" height="3.500"/><rect x="38" y="7.500" width="4" height="3.500"/>
<path d="M60.500 2.500h4.500v8.500h-4.500zM66 2.500h4.500v8.500h-4.500z" fill="#d9d9d9" stroke="#8a8a8a"/><path d="M61.500 5h2.500M61.500 7h2.500M61.500 9h2.500M67 5h2.500M67 7h2.500M67 9h2.500" stroke="#9a9a9a" stroke-width=".7"/>
<path d="M90.500 2h10M91.500 2.500v5h8v-5M95.500 7.500v3M93.500 11h4" />
</svg>
<!-- zoom slider (mostly hidden behind watermark) -->
<div class="a" style="left:876px;top:558px;width:62px;height:1px;background:#8a8a8a"></div>
<div class="a" style="left:881px;top:555px;width:2.500px;height:6px;background:#666"></div>
<div class="t" style="left:940px;top:551.500px;color:#707070;font-size:9.500px">+</div>
<div class="t" style="left:953px;top:551.500px;color:#8a8a8a;font-size:9.300px">68%</div>
<svg style="left:984.500px;top:554px" width="10" height="8" viewBox="0 0 10 8" fill="none" stroke="#8a8a8a" stroke-width="1"><rect x=".500" y=".500" width="9" height="7"/><path d="M3 5l2-2 2 2" stroke-width="1.100"/></svg>
<!-- ===== watermark ===== -->
<svg style="left:835px;top:521px" width="40" height="46" viewBox="0 0 40 46">
<path d="M19.800 2.300l17.800 10.300v21.800l-17.800 10.600-17.800-10.600v-21.800z" fill="#c9480a"/>
<path d="M19.800 2.300l17.800 10.300v20.400l-17.800 10.400-17.800-10.400v-20.400z" fill="#eb5d10"/>
<path d="M10.500 17l11.500-4.300 6.500 1.800v15.500l-6.500 2-11.500-4.200 11.500 1.500v-12.600l-7.500 1.800v8.300l-4 1.700z" fill="#fff"/>
</svg>
<div class="t" style="left:878px;top:526px;height:24px;line-height:24px;font-size:20.300px;font-weight:bold;color:#1b9ae1;letter-spacing:-.25px">Office<span style="font-size:19.200px;letter-spacing:0">教程网</span></div>
<div class="t" style="left:877px;top:545px;height:18px;line-height:18px;font-size:13.300px;font-weight:bold;color:#e2641c">www.office26.com</div>
<!-- ===== taskbar strip ===== -->
<div class="a" id="taskbar" style="left:0;top:566px;width:1000px;height:6px;background:linear-gradient(90deg,#3f6f52 0,#4c8560 12%,#5b9a6e 55%,#4f8d63 80%,#3b6b4e 100%);border-top:1px solid #3c6a4d"></div>
<div class="a" style="left:2px;top:569px;width:7px;height:3px;background:#79ad8c;border-radius:3px 3px 0 0"></div>
<div class="a" style="left:44px;top:569.500px;width:11px;height:3px;background:#8ec7a0;border-radius:50% 50% 0 0"></div>
<div class="a" style="left:75px;top:569.500px;width:6px;height:3px;background:#35583f"></div>
<div class="a" style="left:113px;top:569.500px;width:9px;height:3px;background:#86b87a;border-radius:50% 50% 0 0"></div>
<div class="a" style="left:136.5px;top:567.500px;width:46px;height:5px;background:linear-gradient(#c4dccb,#a3c8ae);border:1px solid #7fa88c;border-bottom:0;border-radius:2px 2px 0 0"></div>
<div class="a" style="left:184.8px;top:567.500px;width:46px;height:5px;background:linear-gradient(#c4dccb,#a3c8ae);border:1px solid #7fa88c;border-bottom:0;border-radius:2px 2px 0 0"></div>
<div class="a" style="left:233.1px;top:567.500px;width:46px;height:5px;background:linear-gradient(#c4dccb,#a3c8ae);border:1px solid #7fa88c;border-bottom:0;border-radius:2px 2px 0 0"></div>
<div class="a" style="left:281.4px;top:567.500px;width:46px;height:5px;background:linear-gradient(#c4dccb,#a3c8ae);border:1px solid #7fa88c;border-bottom:0;border-radius:2px 2px 0 0"></div>
<div class="a" style="left:329.7px;top:567.500px;width:46px;height:5px;background:linear-gradient(#c4dccb,#a3c8ae);border:1px solid #7fa88c;border-bottom:0;border-radius:2px 2px 0 0"></div>
<div class="a" style="left:378.0px;top:567.500px;width:46px;height:5px;background:linear-gradient(#c4dccb,#a3c8ae);border:1px solid #7fa88c;border-bottom:0;border-radius:2px 2px 0 0"></div>
<div class="a" style="left:426.3px;top:567.500px;width:46px;height:5px;background:linear-gradient(#c4dccb,#a3c8ae);border:1px solid #7fa88c;border-bottom:0;border-radius:2px 2px 0 0"></div>
<div class="a" style="left:474.6px;top:567.500px;width:46px;height:5px;background:linear-gradient(#c4dccb,#a3c8ae);border:1px solid #7fa88c;border-bottom:0;border-radius:2px 2px 0 0"></div>
</div>
</body>
</html>
